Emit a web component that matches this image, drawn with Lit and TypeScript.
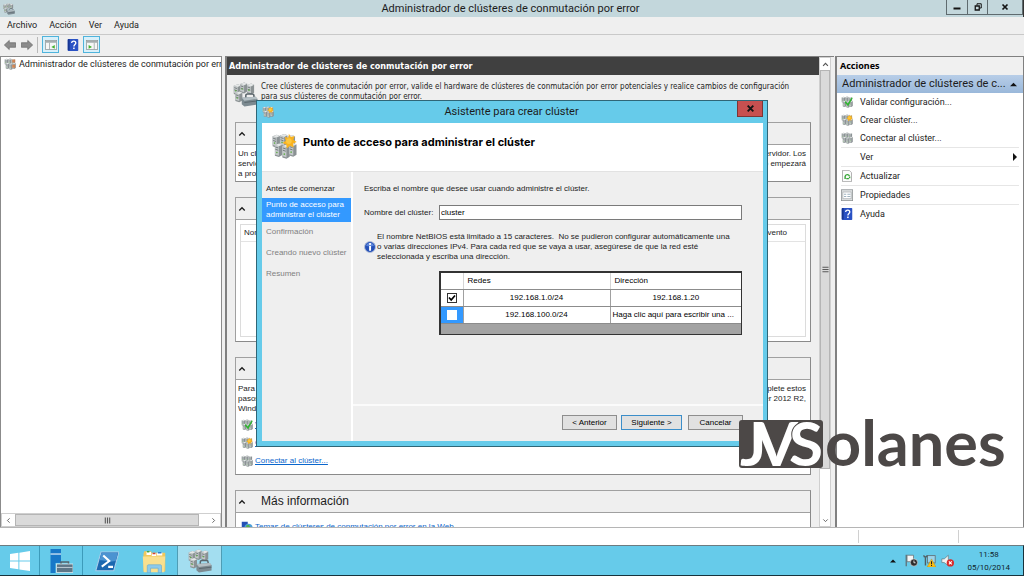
import { LitElement, html, svg, css, nothing } from "lit";
import { customElement, property } from "lit/decorators.js";
import { classMap } from "lit/directives/class-map.js";

const tower = (x: number, y: number, h: number) => svg`
  <path d="M${x} ${y + 1}l2.600-1 1.900.800v${h}l-2 1.200-2.500-.8z" fill="#8b9294"/>
  <path d="M${x} ${y + 1}l2.500.800v${h - 0.6}l-2.500-.8z" fill="#c3c8c9"/>
  <path d="M${x + 0.3} ${y + 2.2}l1.800.600M${x + 0.3} ${y + 3.6}l1.800.600" stroke="#737a7c" stroke-width=".6"/>
  <path d="M${x} ${y + 1}l2.600-1 1.900.800-2 1z" fill="#e4e7e7"/>
  <circle cx="${x + 1.2}" cy="${y + h - 0.8}" r=".5" fill="#5fae45"/>`;

const towers = svg`${tower(1, 1, 6)}${tower(5.6, 0.6, 6)}${tower(10.3, 1.2, 6)}
  ${tower(2.4, 6.4, 6.4)}${tower(7, 7, 6.8)}${tower(11.2, 6.2, 6.4)}`;

const toolbox = svg`<path d="M8.200 10.200v-1.400c0-.8.500-1.100 1.100-1.100h3c.7 0 1.100.4 1.100 1.100v1.400" fill="none" stroke="#5b666c" stroke-width="1"/>
  <path d="M5.600 10l8.900-.600 1.200 1.400v3.600l-8.400 1.300-1.700-1.500z" fill="#7c8a91"/>
  <path d="M5.600 10l8.900-.600 1.200 1.400-8.400 1.200z" fill="#b5c0c5"/>
  <path d="M7.300 13.100l8.400-1" stroke="#59656b" stroke-width=".6"/>`;

const glyphs: Record<string, unknown> = {
  cluster: towers,
  manager: svg`${tower(0.5, 1.4, 5)}${tower(4.6, 0.3, 5)}${tower(9, 1, 5)}${tower(1.5, 6, 5)}${toolbox}`,
  tree: svg`${towers}<path d="M11 2h4v4h-4zM11 9h4v4h-4z" fill="#e07a3a" opacity=".75"/>`,
  validate: svg`${towers}<path d="M6 6.500l3 3.500 5.500-8.500 1 1.500-6 10.500-4.500-5z" fill="#2fb52f"/>`,
  create: svg`${towers}<path d="M11 .500l1.200 2 2.300-.700-.700 2.300 2 1.400-2.200 1 .300 2.400-2.200-1-2 1.600-.300-2.500-2.300-.800 2-1.500-.600-2.200 2.200.400z" fill="#f9b31f"/>
    <circle cx="11" cy="5" r="1.700" fill="#fdc840"/>`,
  refresh: svg`<path d="M2 .500h9l3 3v12H2z" fill="#fbfbfb" stroke="#9a9a9a"/>
    <path d="M5.500 12V8.500a3 3 0 0 1 5.700-.500M10.500 11.500H7M11.500 8.500v2.500" fill="none" stroke="#37a537" stroke-width="1.900"/>`,
  props: svg`<rect x=".5" y="1" width="15" height="14.500" fill="#dfe3e4" stroke="#8b8f91"/>
    <rect x="2.500" y="4" width="11" height="9" fill="#fff" stroke="#a9aeb0"/>
    <path d="M4 7h3M4 10h3M8.500 7h4M8.500 10h4" stroke="#7f9aab"/>`,
  help: svg`<rect x="1" width="14" height="16" rx="1" fill="#2a52c4"/><path d="M1 1v14h2.500V0H2z" fill="#173591"/>
    <path d="M6.300 5.300c0-3.300 5.400-3.200 5.400 0 0 2-2.500 2-2.500 4.600" fill="none" stroke="#fff" stroke-width="1.800"/>
    <rect x="8.200" y="11.400" width="2" height="2" fill="#fff"/>`,
  back: svg`<path d="M.5 8L7 2v3h8.500v6H7v3z" fill="#8b8b8b" stroke="#6b6b6b"/>`,
  forward: svg`<path d="M15.500 8L9 2v3H.5v6H9v3z" fill="#8b8b8b" stroke="#6b6b6b"/>`,
  paneLeft: svg`<rect x=".5" y="2" width="15" height="12" fill="#f6f6f6" stroke="#8f9698"/><path d="M1 2.500h14v2.500H1z" fill="#a5acae"/>
    <path d="M6 5v9" stroke="#9aa1a3"/><path d="M13 8l-4.500 2.500L13 13z" fill="#42b32e"/>`,
  paneRight: svg`<rect x=".5" y="2" width="15" height="12" fill="#f6f6f6" stroke="#8f9698"/><path d="M1 2.500h14v2.500H1z" fill="#a5acae"/>
    <path d="M11 5v9" stroke="#9aa1a3"/><path d="M3.500 8L8 10.500 3.500 13z" fill="#42b32e"/>`,
  info: svg`<circle cx="8" cy="8" r="7.300" fill="#2450b8" stroke="#b4bfd6" stroke-width="1.200"/>
    <path d="M2.500 6a6 6 0 0 1 11 0c-3 1.500-8 1.500-11 0z" fill="#5c85da"/>
    <rect x="6.800" y="6.500" width="2.600" height="6.500" fill="#fff"/><rect x="6.800" y="2.800" width="2.600" height="2.400" fill="#fff"/>`,
  web: svg`<path d="M1 1h8v13H1z" fill="#2450b5"/><circle cx="10" cy="9" r="5.500" fill="#4e9fd8"/><path d="M7 6l3-1 2 2-2 3-3-1z" fill="#53b04a"/>`,
  up: svg`<path d="M2.500 11L8 5.500l5.500 5.500" fill="none" stroke="currentColor" stroke-width="2.600"/>`,
  down: svg`<path d="M3 5.500l5 5 5-5" fill="none" stroke="currentColor" stroke-width="2"/>`,
  left: svg`<path d="M10.500 3l-5 5 5 5" fill="none" stroke="currentColor" stroke-width="2"/>`,
  right: svg`<path d="M5.500 3l5 5-5 5" fill="none" stroke="currentColor" stroke-width="2"/>`,
  triUp: svg`<path d="M0 12L8 4l8 8z" fill="#111"/>`,
  triRight: svg`<path d="M4 0l8 8-8 8z" fill="#111"/>`,
  close: svg`<path d="M3 3l10 10M13 3L3 13" stroke="#141414" stroke-width="3.400"/>`,
  min: svg`<path d="M1 11h14" stroke="#141414" stroke-width="4"/>`,
  restore: svg`<path d="M6 5V1.500h8.500V10H11" fill="none" stroke="#141414" stroke-width="2"/><path d="M2.500 6h8v8h-8z" fill="none" stroke="#141414" stroke-width="2.600"/>`,
  gripV: svg`<path d="M1 3h14M1 8h14M1 13h14" stroke="#5a5a5a" stroke-width="2.500"/>`,
  gripH: svg`<path d="M3 1v14M8 1v14M13 1v14" stroke="#5a5a5a" stroke-width="2.500"/>`,
  start: svg`<path d="M0 2.400l6.700-1v6.200H0zM7.500 1.300L16 0v7.600H7.500zM0 8.400h6.700v6.200l-6.700-1zM7.500 8.400H16V16l-8.500-1.300z" fill="#fff"/>`,
  server: svg`<path d="M1 0h7v16H1z" fill="#1878c8"/><path d="M1 3h7v.7H1z" fill="#fff"/>
    <path d="M4.300 9.300H8V16H4.300z" fill="#66cbea"/>
    <path d="M8 10V8.700h5V10" fill="none" stroke="#56646c"/><rect x="5" y="10" width="11" height="5.700" fill="#5d7687" stroke="#e3eef2" stroke-width=".5"/>
    <path d="M5.300 12.300h10.400" stroke="#c7d5dc" stroke-width=".6"/>`,
  shell: svg`<path d="M4 2h12l-3.500 12.500H.5z" fill="#1c68b0" stroke="#a7cdea" stroke-width=".7"/><path d="M4.300 2.500h11L13.800 8C9 9 6 7 3 7.500z" fill="#4b93d1"/>
    <path d="M5.500 4.300l4 3.700-5 3.700M8.800 11.900h3.200" fill="none" stroke="#fff" stroke-width="1.400"/>`,
  folder: svg`<path d="M1 3l.5-1.500H6l.5 1h9V15H1z" fill="#f0c85c"/><path d="M3 2h3v2H3zM6.500 2.700h3v2h-3zM10 2.300h3.500v2H10z" fill="#fff"/>
    <path d="M3.300 1.300h1.600v1H3.300z" fill="#3fa948"/><path d="M7 2.500h2v1H7z" fill="#d64433"/><path d="M10.500 2h2.500v1h-2.500z" fill="#2d7fd0"/>
    <path d="M.5 5h15l-.7 10.500H1.200z" fill="#f9e08f"/><path d="M3.500 15.800v-4.300c0-.7.300-1 1-1h7.500c.7 0 1 .3 1 1v4.300h-2.200v-3H5.700v3z" fill="#8ecbeb" stroke="#5fa8d4" stroke-width=".4"/>`,
  flag: svg`<path d="M1.500 1v14" stroke="#5d6b70" stroke-width="1.500"/><path d="M2.500 1.500h8v8h-8z" fill="#f5f5f5" stroke="#67757a"/>
    <circle cx="11" cy="10.500" r="4.500" fill="#2d2d2d" stroke="#e2e2e2" stroke-width=".8"/><path d="M11 8v2.800h2" stroke="#fff" fill="none"/>`,
  net: svg`<rect x="5.500" y="2" width="9.500" height="9" fill="#9bd3ea" stroke="#5f6d72"/><path d="M1 1.500c0 3 4 3 4 0M3 4v10" stroke="#505e63" stroke-width="1.700" fill="none"/>
    <path d="M10.500 6l5.500 10H5z" fill="#fbbf16" stroke="#a97a00" stroke-width=".4"/><path d="M10.500 9v3.700M10.500 13.600v1.200" stroke="#222" stroke-width="1.300"/>`,
  sound: svg`<path d="M1 6h3l5-4.500v13L4 10.500H1z" fill="#f2f2f2" stroke="#64747a" stroke-width=".8"/>
    <circle cx="11.500" cy="11" r="4.500" fill="#d92b2b"/><path d="M9.700 9.200l3.600 3.600M13.300 9.200l-3.600 3.600" stroke="#fff" stroke-width="1.300"/>`,
};

@customElement("ui-icon")
class UiIcon extends LitElement {
  @property() name = "";
  static styles = css`
    :host { display: block; flex: none; width: 12px; height: 12px; }
    svg { display: block; width: 100%; height: 100%; }
  `;
  render() {
    return html`<svg viewBox="0 0 16 16" aria-hidden="true">${glyphs[this.name]}</svg>`;
  }
}

@customElement("create-cluster-dialog")
class CreateClusterDialog extends LitElement {
  static styles = css`
    :host {
      display: flex; flex-direction: column; box-sizing: border-box;
      border: 1px solid #2f6677; padding: 0 4px 5px 5px; background: #66cbea;
      font: 8px/10px "Liberation Sans", Arial, sans-serif; color: #1c1c1c;
    }
    * { box-sizing: border-box; }
    .title { display: flex; height: 22px; align-items: center; font: 11px/22px Roboto, sans-serif; }
    .title h2 { flex: 1; margin: 0; padding-left: 12px; font: inherit; text-align: center; }
    .close {
      display: flex; align-self: flex-start; width: 26px; height: 16px; padding: 0; margin: 0;
      align-items: center; justify-content: center; background: #c75050; border: 1px solid #7d3535; border-top: 0;
    }
    .close ui-icon { width: 9px; height: 9px; }
    .banner { display: flex; height: 49px; padding: 10px 9px; gap: 6px; background: #fff; border-bottom: 1px solid #e2e2e2; }
    .banner ui-icon { width: 26px; height: 26px; }
    .banner h3 { margin: 0; font: bold 11px/18px Inter, sans-serif; color: #000; }
    .body { flex: 1; display: grid; grid-template-columns: 89px minmax(0, 1fr); background: #efefef; }
    .steps { margin: 0; padding: 7px 0 0; list-style: none; color: #808080; }
    .steps li { padding: 5px 4px 6px; }
    .steps .done { color: #1c1c1c; padding-bottom: 4px; }
    .steps .current { padding: 2px 4px; background: #3399ff; color: #fff; }
    .page { display: flex; flex-direction: column; border-left: 2px solid #fff; }
    .content { flex: 1; padding: 12px 21px 0 11px; }
    .content p { margin: 0; }
    .field { display: grid; grid-template-columns: 75px minmax(0, 1fr); align-items: center; margin: 11px 0 12px; }
    .field input {
      height: 15px; padding: 0 1px; border: 1px solid #7a7a7a; border-radius: 0; background: #fff;
      font: inherit; color: #000;
    }
    .note { display: flex; align-items: center; gap: 1px; }
    .note p { white-space: pre-line; }
    .grid { margin: 9px 0 0 75px; border: 1px solid #333; border-width: 2px 1px 1px 2px; background: #a3a3a3; padding-bottom: 10px; }
    table { width: 100%; border-collapse: collapse; table-layout: fixed; background: #fff; color: #000; }
    th { height: 16px; padding: 0 4px; font-weight: normal; text-align: left; border-left: 1px solid #d5d5d5; border-bottom: 1px solid #8c8c8c; }
    td { height: 17px; padding: 0 2px; text-align: center; white-space: nowrap; border-left: 1px solid #a0a0a0; border-bottom: 1px solid #8c8c8c; }
    th:first-child, td:first-child { border-left: 0; padding: 0; }
    .check { width: 22px; }
    .redes { width: 49%; }
    .sel { background: #3399ff; }
    .prompt { text-align: left; }
    input[type="checkbox"] {
      appearance: none; display: block; width: 10px; height: 10px; margin: 0 auto; background: #fff; border: 1px solid #333;
    }
    .sel input[type="checkbox"] { border-color: #fff; }
    input[type="checkbox"]:checked {
      background: url("data:image/svg+xml,%3Csvg xmlns='http://www.w3.org/2000/svg' viewBox='0 0 8 8'%3E%3Cpath d='M1 3.500l2.200 2.500L7 1.500' fill='none' stroke='%23000' stroke-width='1.700'/%3E%3C/svg%3E") center / 8px 8px no-repeat #fff;
    }
    .foot { display: flex; justify-content: flex-end; height: 37px; padding: 9px 20px 0; border-top: 2px solid #fbfbfb; }
    .foot button {
      width: 55px; height: 15px; padding: 0; margin: 0 0 0 4px; background: #e1e1e1; border: 1px solid #8e8e8e;
      font: inherit; color: #000;
    }
    .foot .next { width: 61px; margin-right: 2px; border-color: #3c8ec9; }
  `;
  render() {
    const rows = [
      { net: "192.168.1.0/24", addr: "192.168.1.20", on: true },
      { net: "192.168.100.0/24", addr: "Haga clic aquí para escribir una ...", on: false },
    ];
    return html`
      <header class="title">
        <ui-icon name="create"></ui-icon>
        <h2>Asistente para crear clúster</h2>
        <button class="close" aria-label="Cerrar"><ui-icon name="close"></ui-icon></button>
      </header>
      <div class="banner"><ui-icon name="create"></ui-icon><h3>Punto de acceso para administrar el clúster</h3></div>
      <div class="body">
        <ol class="steps">
          <li class="done">Antes de comenzar</li>
          <li class="current">Punto de acceso para administrar el clúster</li>
          <li>Confirmación</li>
          <li>Creando nuevo clúster</li>
          <li>Resumen</li>
        </ol>
        <div class="page">
          <div class="content">
            <p>Escriba el nombre que desee usar cuando administre el clúster.</p>
            <div class="field">
              <label for="name">Nombre del clúster:</label>
              <input id="name" type="text" .value=${"cluster"} />
            </div>
            <div class="note">
              <ui-icon name="info"></ui-icon>
              <p>${"El nombre NetBIOS está limitado a 15 caracteres.\u00a0 No se pudieron configurar automáticamente una\no varias direcciones IPv4. Para cada red que se vaya a usar, asegúrese de que la red esté\nseleccionada y escriba una dirección."}</p>
            </div>
            <div class="grid">
              <table>
                <thead><tr><th class="check"></th><th class="redes">Redes</th><th>Dirección</th></tr></thead>
                <tbody>
                  ${rows.map((r) => html`<tr>
                    <td class=${classMap({ sel: !r.on })}><input type="checkbox" aria-label=${r.net} .checked=${r.on} /></td>
                    <td>${r.net}</td>
                    <td class=${classMap({ prompt: !r.on })}>${r.addr}</td>
                  </tr>`)}
                </tbody>
              </table>
            </div>
          </div>
          <div class="foot">
            <button>&lt; Anterior</button><button class="next">Siguiente &gt;</button><button>Cancelar</button>
          </div>
        </div>
      </div>`;
  }
}

@customElement("app-root")
class AppRoot extends LitElement {
  static styles = css`
    :host {
      display: flex; flex-direction: column; position: relative; box-sizing: border-box; height: 100vh; overflow: hidden;
      background: #efefef; color: #1c1c1c; font: 9px/18px Roboto, "Noto Sans", sans-serif;
    }
    * { box-sizing: border-box; }
    button { font: inherit; color: inherit; margin: 0; padding: 0; border: 0; background: none; }
    .titlebar { display: flex; flex: none; height: 17px; padding-left: 3px; align-items: center; background: #c3d7dc; border-right: 1px solid #333; }
    .titlebar h1 { flex: 1; margin: 0; padding-left: 60px; font: 11px/17px Roboto, sans-serif; text-align: center; }
    .winbtns { display: flex; align-self: flex-start; height: 15px; border: 1px solid #5f6b6f; border-top: 0; }
    .winbtns button { display: flex; width: 20px; align-items: center; justify-content: center; border-left: 1px solid #5f6b6f; }
    .winbtns button:first-child { border-left: 0; }
    .winbtns button:last-child { width: 35px; }
    .winbtns ui-icon { width: 8px; height: 8px; }
    .menu { display: flex; flex: none; height: 18px; padding-left: 7px; gap: 12px; border-bottom: 1px solid #c9c9c9; line-height: 17px; }
    .tools { display: flex; flex: none; height: 21px; padding: 0 3px 2px; align-items: center; gap: 4px; }
    .tools button { display: flex; width: 13px; height: 17px; align-items: center; justify-content: center; }
    .tools .on { width: 17px; border: 1px solid #4fb4dc; background: #d9f0fa; }
    .tools .rule { width: 1px; height: 16px; background: #b9b9b9; }
    .tools .help { margin-left: 3px; }
    .panes { flex: 1; min-height: 0; display: grid; grid-template-columns: 222px minmax(0, 1fr) 188px; gap: 3px; }
    .left { display: flex; flex-direction: column; min-width: 0; background: #fff; border: 1px solid #8b8b8b; border-bottom: 0; }
    .node { display: flex; flex: 1; align-items: flex-start; gap: 3px; padding-left: 3px; overflow: hidden; white-space: nowrap; line-height: 15px; }
    .node ui-icon { margin-top: 1px; }
    .hbar { display: flex; height: 14px; background: #fff; border: 1px solid #cfcfcf; }
    .hbar button, .vbar button { display: flex; flex: none; width: 13px; height: 12px; align-items: center; justify-content: center; color: #555; }
    .hbar ui-icon, .vbar ui-icon { width: 7px; height: 7px; }
    .thumb { display: flex; align-items: center; justify-content: center; background: #dadada; border: 1px solid #b5b5b5; }
    .hbar .thumb { flex: 1; margin-right: 8px; }
    .center { display: flex; min-width: 0; min-height: 0; padding-right: 3px; border-left: 2px solid #808080; border-top: 1px solid #808080; margin-right: -1px; }
    .view { flex: 1; min-width: 0; overflow: hidden; font: 8px/10px "Liberation Sans", Arial, sans-serif; }
    .view h2 { margin: 0; padding-left: 2px; background: #404040; color: #fff; font: bold 9px/18px "DejaVu Sans Condensed", "DejaVu Sans", sans-serif; }
    .intro { display: flex; gap: 3px; height: 47px; padding: 7px 8px 0 6px; }
    .intro ui-icon { width: 25px; height: 25px; }
    .intro p { margin: 0; font-family: "DejaVu Sans Condensed", "DejaVu Sans", sans-serif; }
    .group { margin: 0 8px 15px; border: 1px solid #a0a0a0; border-right-color: #8a8a8a; border-bottom-color: #8a8a8a; background: #fff; }
    .group h3 { display: flex; align-items: center; gap: 15px; height: 22px; margin: 0; padding-left: 2px; background: #efefef; border-bottom: 1px solid #a0a0a0; font: 12px/21px "Liberation Sans", Arial, sans-serif; }
    .group h3 ui-icon { width: 8px; height: 8px; }
    .text { padding: 4px 4px 2px 2px; }
    .line { display: flex; justify-content: space-between; white-space: nowrap; }
    .events { margin: 4px; height: 113px; border: 1px solid #dcdcdc; }
    .events table { width: 100%; border-collapse: collapse; }
    .events th { height: 16px; padding: 0 18px 0 3px; font-weight: normal; text-align: left; border-bottom: 1px solid #e3e3e3; }
    .events th:last-child { text-align: right; }
    .links { margin: 0; padding: 0 0 4px 5px; list-style: none; }
    .more-info { padding-top: 5px; }
    .links li { display: flex; align-items: center; gap: 2px; height: 18px; }
    .links a { color: #0a66cc; }
    .vbar { display: flex; flex-direction: column; flex: none; width: 12px; background: #fff; border: 1px solid #cfcfcf; }
    .vbar button { width: 100%; }
    .vbar .thumb { flex: 1; margin-bottom: 45px; }
    .actions { background: #fff; border: 1px solid #808080; border-width: 1px 1px 0 2px; margin-left: -1px; }
    .actions h2 { margin: 0; padding-left: 3px; background: #f0f0f0; font: bold 9px/18px "Noto Sans", sans-serif; color: #000; }
    .acthead { display: flex; justify-content: space-between; align-items: center; width: 100%; height: 18px; padding: 0 6px 0 5px; background: linear-gradient(#b8cee8, #9ab8da); font-size: 11px; }
    .acthead ui-icon { width: 7px; height: 7px; }
    .actions ul { margin: 0; padding: 0 4px; list-style: none; }
    .actions li.sep { border-top: 1px solid #e6e6e6; }
    .actions li button { display: flex; width: 100%; height: 18px; align-items: center; gap: 7px; text-align: left; }
    .actions li span { flex: 1; }
    .actions li .more { width: 8px; height: 8px; }
    .blank { width: 12px; }
    .status { display: grid; flex: none; grid-template-columns: minmax(0, 1fr) 100px 66px; height: 18px; padding: 2px 0; background: #fff; border-top: 1px solid #b5b5b5; }
    .status span + span { border-left: 1px solid #d0d0d0; }
    .taskbar { display: flex; flex: none; height: 31px; background: #66cbea; border: 1px solid #6c7b80; border-color: #6c7b80 #17323c #17323c; border-left: 0; }
    .taskbar button { display: flex; width: 47px; align-items: center; justify-content: center; }
    .taskbar .start { width: 39px; }
    .taskbar .server { width: 44px; border: 1px solid #3c9bbb; border-width: 0 1px; }
    .taskbar .active { width: 45px; background: #a3def0; border: 1px solid #4f9db5; border-width: 0 1px; }
    .taskbar ui-icon { width: 24px; height: 24px; }
    .taskbar .start ui-icon { width: 20px; height: 20px; }
    .tray { display: flex; flex: 1; justify-content: flex-end; align-items: center; gap: 5px; padding-right: 13px; }
    .tray ui-icon { width: 13px; height: 13px; }
    .tray .caret { width: 6px; height: 6px; margin-right: 4px; }
    .clock { margin-left: 8px; font-size: 8px; line-height: 13px; text-align: center; color: #10242b; }
    create-cluster-dialog { position: absolute; left: 25%; top: 100px; width: 50%; height: 347px; }
    .brand { position: absolute; right: 17px; top: 416px; width: 268px; height: 60px; }
    .brand text { font-family: Lato, sans-serif; font-weight: bold; font-size: 63px; fill: #4c4847; }
    .brand .mono { fill: #fff; font-size: 62px; }
    .brand .edge { stroke: #4c4847; stroke-width: 2px; paint-order: stroke; }
  `;

  private group(title: string, body: unknown) {
    return html`<section class="group"><h3><ui-icon name="up"></ui-icon>${title || nothing}</h3>${body}</section>`;
  }

  private lines(rows: [string, string][]) {
    return html`<div class="text">${rows.map(([a, b]) => html`<div class="line"><span>${a}</span><span>${b}</span></div>`)}</div>`;
  }

  render() {
    const actions = [
      ["validate", "Validar configuración..."], ["create", "Crear clúster..."], ["cluster", "Conectar al clúster..."],
      ["", "Ver"], ["refresh", "Actualizar"], ["props", "Propiedades"], ["help", "Ayuda"],
    ];
    return html`
      <header class="titlebar">
        <ui-icon name="manager"></ui-icon>
        <h1>Administrador de clústeres de conmutación por error</h1>
        <div class="winbtns">
          <button aria-label="Minimizar"><ui-icon name="min"></ui-icon></button>
          <button aria-label="Restaurar"><ui-icon name="restore"></ui-icon></button>
          <button aria-label="Cerrar"><ui-icon name="close"></ui-icon></button>
        </div>
      </header>
      <nav class="menu">${["Archivo", "Acción", "Ver", "Ayuda"].map((m) => html`<button>${m}</button>`)}</nav>
      <div class="tools">
        <button aria-label="Atrás"><ui-icon name="back"></ui-icon></button>
        <button aria-label="Adelante"><ui-icon name="forward"></ui-icon></button>
        <span class="rule"></span>
        <button class="on" aria-label="Árbol"><ui-icon name="paneLeft"></ui-icon></button>
        <button class="help" aria-label="Ayuda"><ui-icon name="help"></ui-icon></button>
        <button class="on" aria-label="Panel de acciones"><ui-icon name="paneRight"></ui-icon></button>
      </div>
      <div class="panes">
        <aside class="left">
          <div class="node"><ui-icon name="tree"></ui-icon>Administrador de clústeres de conmutación por error</div>
          <div class="hbar">
            <button aria-label="Izquierda"><ui-icon name="left"></ui-icon></button>
            <div class="thumb"><ui-icon name="gripH"></ui-icon></div>
            <button aria-label="Derecha"><ui-icon name="right"></ui-icon></button>
          </div>
        </aside>
        <main class="center">
          <div class="view">
            <h2>Administrador de clústeres de conmutación por error</h2>
            <div class="intro">
              <ui-icon name="manager"></ui-icon>
              <p>Cree clústeres de conmutación por error, valide el hardware de clústeres de conmutación por error potenciales y realice cambios de configuración<br />para sus clústeres de conmutación por error.</p>
            </div>
            ${this.group("", this.lines([
              ["Un clúster de conmutación por error es un conjunto de equipos", "la disponibilidad de los roles de servidor. Los"],
              ["servidores en clúster están conectados", "otro nodo empezará"],
              ["a proporcionar servicio", ""],
            ]))}
            ${this.group("", html`<div class="events"><table><tr><th>Nombre</th><th>Evento</th></tr></table></div>`)}
            ${this.group("", html`${this.lines([
              ["Para comenzar a usar clústeres", "complete estos"],
              ["pasos en el servidor", "Windows Server 2012 R2,"],
              ["Windows Server 2012", ""],
            ])}
              <ul class="links">
                <li><ui-icon name="validate"></ui-icon><a href="#">Validar configuración...</a></li>
                <li><ui-icon name="create"></ui-icon><a href="#">Crear clúster...</a></li>
                <li><ui-icon name="cluster"></ui-icon><a href="#">Conectar al clúster...</a></li>
              </ul>`)}
            ${this.group("Más información", html`<ul class="links more-info">
              <li><ui-icon name="web"></ui-icon><a href="#">Temas de clústeres de conmutación por error en la Web</a></li>
            </ul>`)}
          </div>
          <div class="vbar">
            <button aria-label="Arriba"><ui-icon name="up"></ui-icon></button>
            <div class="thumb"><ui-icon name="gripV"></ui-icon></div>
            <button aria-label="Abajo"><ui-icon name="down"></ui-icon></button>
          </div>
        </main>
        <aside class="actions">
          <h2>Acciones</h2>
          <button class="acthead">Administrador de clústeres de c... <ui-icon name="triUp"></ui-icon></button>
          <ul>
            ${actions.map(([icon, label], i) => html`<li class=${classMap({ sep: i > 2 })}><button>
              ${icon ? html`<ui-icon name=${icon}></ui-icon>` : html`<i class="blank"></i>`}<span>${label}</span>
              ${icon ? nothing : html`<ui-icon class="more" name="triRight"></ui-icon>`}
            </button></li>`)}
          </ul>
        </aside>
      </div>
      <footer class="status"><span></span><span></span><span></span></footer>
      <nav class="taskbar">
        <button class="start" aria-label="Inicio"><ui-icon name="start"></ui-icon></button>
        <button class="server" aria-label="Administrador del servidor"><ui-icon name="server"></ui-icon></button>
        <button aria-label="PowerShell"><ui-icon name="shell"></ui-icon></button>
        <button aria-label="Explorador"><ui-icon name="folder"></ui-icon></button>
        <button class="active" aria-label="Clústeres"><ui-icon name="manager"></ui-icon></button>
        <div class="tray">
          <ui-icon class="caret" name="triUp"></ui-icon>
          <ui-icon name="flag"></ui-icon><ui-icon name="net"></ui-icon><ui-icon name="sound"></ui-icon>
          <div class="clock">11:58<br />05/10/2014</div>
        </div>
      </nav>
      <create-cluster-dialog role="dialog"></create-cluster-dialog>
      <svg class="brand" viewBox="0 0 268 60">
        <rect x="0" y="4" width="84" height="48" rx="3" fill="#4c4847" />
        <text class="mono" x="1" y="50">J</text>
        <text class="mono" x="16" y="50">V</text>
        <text class="mono edge" x="50" y="50">S</text>
        <text x="86" y="50">olanes</text>
      </svg>`;
  }
}
